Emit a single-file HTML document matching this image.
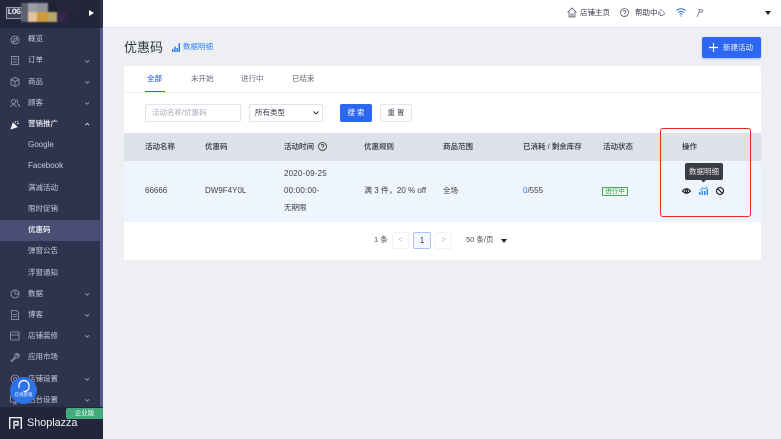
<!DOCTYPE html>
<html lang="zh"><head><meta charset="utf-8"><title>优惠码</title>
<style>
*{box-sizing:border-box;margin:0;padding:0}
html,body{width:781px;height:439px;overflow:hidden;background:#eeeff3}
body{font-family:"Liberation Sans","Noto Sans CJK SC",sans-serif;font-size:8px;color:#3a3f4e;position:relative}
#root{position:absolute;inset:0;filter:blur(.35px)}
.a{position:absolute;white-space:nowrap;line-height:12px}
.sb{position:absolute;left:0;top:0;width:103px;height:439px;background:#2f344e}
.sb .t{position:absolute;left:28px;color:#c6c9d8;line-height:12px;font-size:7.5px;white-space:nowrap}
.sb svg{position:absolute;overflow:visible;fill:none;stroke:#9ea2b5;stroke-width:.8}
.th{font-size:7.5px;color:#2c3040;font-weight:500}
.td{font-size:7.5px;color:#3a3e4c}
svg{position:absolute;overflow:visible}
</style></head><body><div id="root">
<!-- main -->
<div class="a" style="left:103px;top:0;width:678px;height:28px;background:#fff;border-bottom:1px solid #e2e4ea"></div>
<svg style="left:567px;top:7px" width="10" height="11" fill="none" stroke="#555a68" stroke-width=".8"><path d="M.5 5.500L5 1l4.500 4.500M2 4.500V10h6V4.500M4 10V7h2v3"/></svg>
<div class="a" style="left:580px;top:7px;font-size:7.5px;color:#333846">店铺主页</div>
<svg style="left:620px;top:8px" width="9" height="9" fill="none" stroke="#555a68" stroke-width=".8"><circle cx="4.500" cy="4.500" r="4"/><path d="M3.200 3.500a1.300 1.300 0 1 1 1.800 1.300q-.5.300-.5 1M4.500 6.800v.6"/></svg>
<div class="a" style="left:635px;top:7px;font-size:7.5px;color:#333846">帮助中心</div>
<svg style="left:676px;top:8px" width="10" height="9" fill="none" stroke="#2f6ae8" stroke-width="1"><path d="M.5 2.500q4.500-3.500 9 0M2 4.500q3-2.300 6 0M3.500 6.300q1.500-1 3 0"/><circle cx="5" cy="8" r=".6" fill="#2f6ae8" stroke="none"/></svg>
<svg style="left:696px;top:8px" width="8" height="9" fill="none" stroke="#666b78" stroke-width=".8"><path d="M1 9L3.500 3M3 1.500h2.500L7 2.500 5 4.500 3.300 3.500z"/></svg>
<svg style="left:765px;top:11px" width="6" height="4"><path d="M0 0h6L3 4z" fill="#222"/></svg>

<div class="a" style="left:124px;top:40px;font-size:13px;line-height:16px;color:#30343f">优惠码</div>
<svg style="left:172px;top:43px" width="8" height="9" fill="#2f7cf0"><rect x="0" y="6" width="1.500" height="3"/><rect x="2.200" y="3.500" width="1.500" height="5.500"/><rect x="4.400" y="5" width="1.500" height="4"/><rect x="6.500" y="0" width="1.500" height="9"/></svg>
<div class="a" style="left:183px;top:41px;font-size:7.5px;color:#2f80f0">数据明细</div>

<div class="a" style="left:702px;top:37px;width:59px;height:21px;background:#2d66ef;border-radius:2px;box-shadow:0 1px 2px rgba(45,102,239,.35)"></div>
<svg style="left:709px;top:43px" width="9" height="9" stroke="#fff" stroke-width="1.200"><path d="M4.500 0v9M0 4.500h9"/></svg>
<div class="a" style="left:723px;top:42px;font-size:7.5px;color:#eef3ff">新建活动</div>

<!-- card -->
<div class="a" style="left:124px;top:66px;width:637px;height:194px;background:#fff"></div>
<div class="a" style="left:124px;top:92px;width:637px;height:1px;background:#eceef2"></div>
<div class="a" style="left:147px;top:73px;font-size:7.5px;color:#2d66ef;font-weight:500">全部</div>
<div class="a" style="left:145px;top:91px;width:20px;height:1.300px;background:#2d66ef"></div>
<div class="a" style="left:191px;top:73px;font-size:7.5px;color:#636879">未开始</div>
<div class="a" style="left:241px;top:73px;font-size:7.5px;color:#636879">进行中</div>
<div class="a" style="left:292px;top:73px;font-size:7.5px;color:#636879">已结束</div>

<div class="a" style="left:145px;top:104px;width:96px;height:18px;border:1px solid #e3e5ec;border-radius:2px;background:#fff;padding-left:6px;line-height:16px;font-size:7.5px;color:#a8abb8">活动名称/优惠码</div>
<div class="a" style="left:249px;top:104px;width:74px;height:18px;border:1px solid #dfe1e8;border-radius:2px;background:#fff;padding-left:5px;line-height:16px;font-size:7.5px;color:#333846">所有类型</div>
<svg style="left:313px;top:111px" width="6" height="4" fill="none" stroke="#222" stroke-width=".9"><path d="M.5.500L3 3 5.500.500"/></svg>
<div class="a" style="left:340px;top:104px;width:32px;height:18px;background:#2d66ef;border-radius:2px;color:#fff;text-align:center;line-height:18px;font-size:7.5px">搜 索</div>
<div class="a" style="left:380px;top:104px;width:32px;height:18px;border:1px solid #e3e5ec;border-radius:2px;background:#fff;color:#444a58;text-align:center;line-height:16px;font-size:7.5px">重 置</div>

<!-- table -->
<div class="a" style="left:124px;top:133px;width:637px;height:28px;background:#dfe1e8"></div>
<div class="a" style="left:124px;top:161px;width:637px;height:61px;background:#eff5ff"></div>
<div class="a th" style="left:145px;top:141px">活动名称</div>
<div class="a th" style="left:205px;top:141px">优惠码</div>
<div class="a th" style="left:284px;top:141px">活动时间</div>
<svg style="left:318px;top:142px" width="9" height="9" fill="none" stroke="#333" stroke-width=".8"><circle cx="4.500" cy="4.500" r="4"/><path d="M3.200 3.500a1.300 1.300 0 1 1 1.800 1.300q-.5.300-.5 1M4.500 6.800v.6"/></svg>
<div class="a th" style="left:364px;top:141px">优惠规则</div>
<div class="a th" style="left:443px;top:141px">商品范围</div>
<div class="a th" style="left:523px;top:141px">已消耗 / 剩余库存</div>
<div class="a th" style="left:603px;top:141px">活动状态</div>
<div class="a th" style="left:682px;top:141px">操作</div>

<div class="a td" style="left:145px;top:185px;font-size:8px">66666</div>
<div class="a td" style="left:205px;top:185px;font-size:8px">DW9F4Y0L</div>
<div class="a td" style="left:284px;top:168px;font-size:8px;letter-spacing:.2px">2020-09-25</div>
<div class="a td" style="left:284px;top:185px;font-size:8px;letter-spacing:.2px">00:00:00-</div>
<div class="a td" style="left:284px;top:202px">无期限</div>
<div class="a td" style="left:364px;top:185px;font-size:8px">满 3 件，20 % off</div>
<div class="a td" style="left:443px;top:185px">全场</div>
<div class="a td" style="left:523px;top:185px;font-size:8px"><span style="color:#2f7cf0">0</span>/555</div>
<div class="a" style="left:602px;top:187px;width:26px;height:9px;border:1px solid #47a95a;background:#eafaee;color:#3d9a50;font-size:6.5px;line-height:7px;text-align:center">进行中</div>

<!-- tooltip -->
<div class="a" style="left:685px;top:163px;width:38px;height:17px;background:#3b3d42;border-radius:2px;color:#e8e8e8;font-size:7.5px;line-height:17px;text-align:center">数据明细</div>
<svg style="left:701px;top:180px" width="5" height="3"><path d="M0 0h5L2.500 2.500z" fill="#3b3d42"/></svg>
<svg style="left:682px;top:187px" width="9" height="8" fill="none" stroke="#111" stroke-width="1"><path d="M.5 4Q4.500-.5 8.500 4 4.500 8.500.5 4z"/><circle cx="4.500" cy="4" r="1.300"/></svg>
<svg style="left:699px;top:186px" width="9" height="9" fill="#2f8cf0"><rect x="0" y="6" width="1.500" height="3"/><rect x="2.500" y="4.500" width="1.500" height="4.500"/><rect x="5" y="5" width="1.500" height="4"/><rect x="7.500" y="2.500" width="1.500" height="6.500"/><path d="M.5 4.500L3.500 2 5.500 3 8 .5" fill="none" stroke="#2f8cf0" stroke-width=".8"/></svg>
<svg style="left:716px;top:187px" width="8" height="8" fill="none" stroke="#111" stroke-width="1.100"><circle cx="4" cy="4" r="3.500"/><path d="M1.500 1.500l5 5"/></svg>

<!-- red box -->
<div class="a" style="left:660px;top:128px;width:91px;height:89px;border:1.400px solid #ee2a18;border-radius:3px"></div>

<!-- pagination -->
<div class="a" style="left:374px;top:234px;font-size:7.5px;color:#444a58">1 条</div>
<div class="a" style="left:392px;top:232px;width:17px;height:17px;border:1px solid #f1f2f6;border-radius:2px;color:#b5b8c4;text-align:center;line-height:14px;font-size:8px">&lt;</div>
<div class="a" style="left:413px;top:232px;width:18px;height:17px;border:1px solid #a9c4f5;border-radius:2px;background:#f4f7fd;color:#333846;text-align:center;line-height:15px;font-size:8px">1</div>
<div class="a" style="left:435px;top:232px;width:17px;height:17px;border:1px solid #f1f2f6;border-radius:2px;color:#b5b8c4;text-align:center;line-height:14px;font-size:8px">&gt;</div>
<div class="a" style="left:466px;top:234px;font-size:7.5px;color:#444a58">50 条/页</div>
<svg style="left:501px;top:239px" width="6" height="4"><path d="M0 0h6L3 4z" fill="#222"/></svg>

<!-- sidebar -->
<div class="sb">
<div style="position:absolute;left:0;top:0;width:100px;height:28px;background:#23263a"></div>
<div style="position:absolute;left:100px;top:28px;width:3px;height:379px;background:#515a8c"></div>
<div style="position:absolute;left:6px;top:7px;width:16px;height:12px;border:1px solid #9a9dae;background:#3c4056;color:#e6e6ee;font:bold 8px/10px 'Liberation Mono',monospace;text-align:center;overflow:hidden;letter-spacing:-.5px">LOG</div>
<div style="position:absolute;left:0;top:0;width:100px;height:28px;filter:blur(.8px)">
<div style="position:absolute;left:21px;top:3px;width:7px;height:19px;background:#5d6070"></div>
<div style="position:absolute;left:28px;top:3px;width:9px;height:9px;background:#9c9ea6"></div>
<div style="position:absolute;left:37px;top:3px;width:11px;height:9px;background:#90939c"></div>
<div style="position:absolute;left:48px;top:3px;width:9px;height:9px;background:#1d2130"></div>
<div style="position:absolute;left:57px;top:3px;width:18px;height:9px;background:#252639"></div>
<div style="position:absolute;left:28px;top:12px;width:9px;height:10px;background:#e2c39c"></div>
<div style="position:absolute;left:37px;top:12px;width:11px;height:10px;background:#cf9a3c"></div>
<div style="position:absolute;left:48px;top:12px;width:9px;height:10px;background:#b9a86c"></div>
<div style="position:absolute;left:57px;top:12px;width:10px;height:10px;background:#35254a"></div>
</div>
<svg style="left:89px;top:10px" width="5" height="6"><path d="M0 0l5 3-5 3z" fill="#fff" stroke="none"/></svg>

<div style="position:absolute;left:0;top:220px;width:100px;height:21px;background:#484e74"></div>

<div class="t" style="top:33px">概览</div>
<div class="t" style="top:54px">订单</div>
<div class="t" style="top:76px">商品</div>
<div class="t" style="top:97px">顾客</div>
<div class="t" style="top:118px;color:#f2f3f8;font-weight:500">营销推广</div>
<div class="t" style="top:139px;font-size:8px">Google</div>
<div class="t" style="top:160px;font-size:8px">Facebook</div>
<div class="t" style="top:182px">满减活动</div>
<div class="t" style="top:203px">限时促销</div>
<div class="t" style="top:224px;color:#fff;font-weight:500">优惠码</div>
<div class="t" style="top:245px">弹窗公告</div>
<div class="t" style="top:267px">浮窗通知</div>
<div class="t" style="top:288px">数据</div>
<div class="t" style="top:309px">博客</div>
<div class="t" style="top:330px">店铺装修</div>
<div class="t" style="top:351px">应用市场</div>
<div class="t" style="top:373px">店铺设置</div>
<div class="t" style="top:394px">后台设置</div>

<!-- icons -->
<svg style="left:10px;top:35px" width="10" height="10"><circle cx="5" cy="5" r="4"/><path d="M3 7l1-3 3-1-1 3z"/></svg>
<svg style="left:11px;top:56px" width="8" height="9"><rect x=".5" y=".5" width="7" height="8"/><path d="M2 3h4M2 6h4"/></svg>
<svg style="left:10px;top:77px" width="10" height="10"><path d="M5 .5L9 2.500v5L5 9.500 1 7.500v-5zM1 2.500L5 4.500l4-2M5 4.500v5"/></svg>
<svg style="left:10px;top:99px" width="10" height="9"><circle cx="3.500" cy="2.500" r="2"/><path d="M.5 8q3-5 6 0M6 .8a2 2 0 0 1 1 3.500M8 5q1.500 1 1.500 3"/></svg>
<svg style="left:10px;top:120px" width="10" height="10"><path d="M1 9L3 3l4 4zM5 3l1-2M7 4l2-1M7 1l1 1" fill="#f2f3f8" stroke="#f2f3f8"/></svg>
<svg style="left:10px;top:289px" width="10" height="10"><circle cx="5" cy="5" r="4"/><path d="M5 1v4h4"/></svg>
<svg style="left:11px;top:310px" width="8" height="10"><path d="M.5.500h5l2 2v7h-7zM2 4.500h4M2 6.500h4"/></svg>
<svg style="left:10px;top:331px" width="10" height="10"><rect x=".5" y="1" width="8.500" height="8" rx="1"/><path d="M.5 4h8.500"/></svg>
<svg style="left:10px;top:352px" width="10" height="10"><path d="M1 9l4-4a2.500 2.500 0 0 1 3-3.500L6.500 3 7.500 4 9 2.500A2.500 2.500 0 0 1 5.800 5.800L2 9.500z"/></svg>
<svg style="left:10px;top:374px" width="10" height="10"><circle cx="5" cy="5" r="4"/><circle cx="5" cy="5" r="1.500"/></svg>
<svg style="left:10px;top:395px" width="10" height="10"><rect x=".5" y="1" width="9" height="6"/><path d="M3 9h4M5 7v2"/></svg>

<!-- chevrons -->
<svg style="left:85px;top:59.500px" width="5" height="3" stroke-width=".7"><path d="M.3.300L2.200 2.200 4.100.300"/></svg>
<svg style="left:85px;top:80.500px" width="5" height="3"><path d="M.3.300L2.200 2.200 4.100.300"/></svg>
<svg style="left:85px;top:102px" width="5" height="3"><path d="M.3.300L2.200 2.200 4.100.300"/></svg>
<svg style="left:85px;top:123px" width="5" height="3"><path d="M.3 2.200L2.200.3 4.100 2.200" stroke="#e6e8f0"/></svg>
<svg style="left:85px;top:293px" width="5" height="3"><path d="M.3.300L2.200 2.200 4.100.300"/></svg>
<svg style="left:85px;top:314px" width="5" height="3"><path d="M.3.300L2.200 2.200 4.100.300"/></svg>
<svg style="left:85px;top:335px" width="5" height="3"><path d="M.3.300L2.200 2.200 4.100.300"/></svg>
<svg style="left:85px;top:378px" width="5" height="3"><path d="M.3.300L2.200 2.200 4.100.300"/></svg>
<svg style="left:85px;top:399px" width="5" height="3"><path d="M.3.300L2.200 2.200 4.100.300"/></svg>

<!-- footer -->
<div style="position:absolute;left:0;top:407px;width:103px;height:32px;background:#23263a"></div>
<div style="position:absolute;left:66px;top:408px;width:37px;height:11px;background:#45ab7a;border-radius:2px 0 0 2px;color:#eafff4;font-size:6.5px;line-height:11px;text-align:center">企业版</div>
<svg style="left:9px;top:417px" width="13" height="12"><path d="M.7 12V.7h11.600V12M5 12V4.500h4V8H6" stroke="#f0f0f4" stroke-width="1.400" fill="none"/></svg>
<div style="position:absolute;left:27px;top:416px;color:#f0f0f4;font-size:10.800px;line-height:14px;white-space:nowrap">Shoplazza</div>
</div>

<!-- support bubble -->
<div class="a" style="left:10px;top:377px;width:27px;height:27px;border-radius:50%;background:#2e73e8"></div>
<svg style="left:17px;top:379px" width="14" height="14" fill="none" stroke="#fff" stroke-width="1.200"><path d="M2 9V6.500a5 5 0 0 1 10 0V9M6.500 12.500q4 .5 5.500-3.500"/></svg>
<div class="a" style="left:13px;top:391px;width:21px;font-size:4.500px;line-height:8px;color:#e8f0ff;text-align:center">在线客服</div>
</div></body></html>
